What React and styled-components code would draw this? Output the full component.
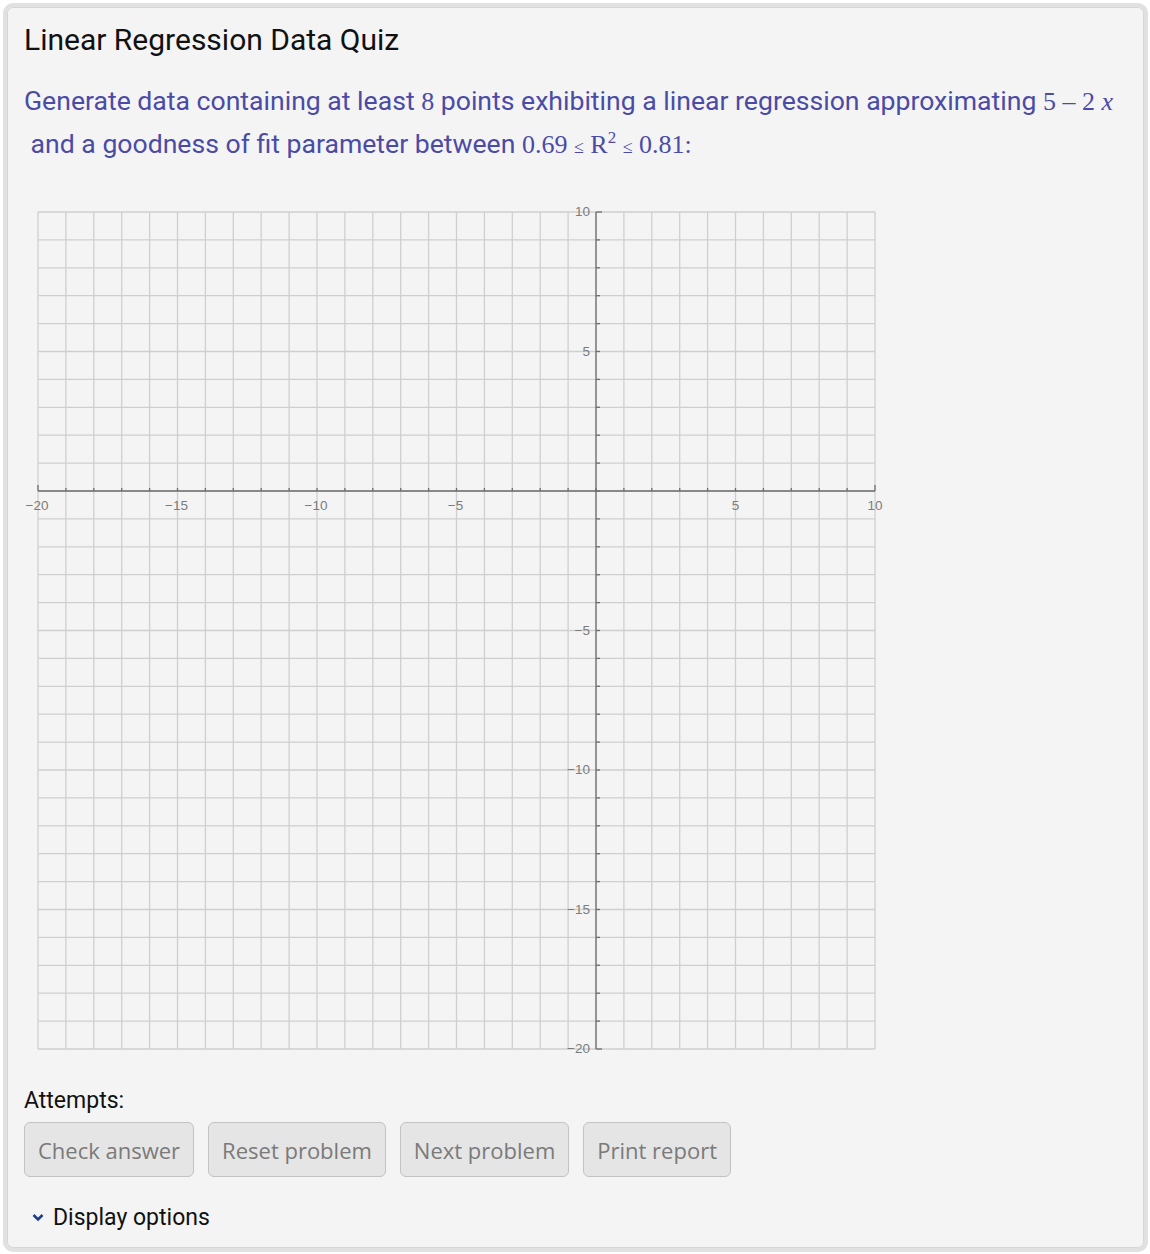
import styled, { createGlobalStyle } from "styled-components";

const Global = createGlobalStyle`
  body {
    margin: 0;
    background: #ffffff;
    font-family: Roboto, "Liberation Sans", sans-serif;
  }
`;

const U = 837 / 30;
const L = 14;
const T = 12;
const px = (x) => L + (x + 20) * U;
const py = (y) => T + (10 - y) * U;

function Plot() {
  const xs = [];
  for (let i = -20; i <= 10; i++) xs.push(i);
  const ys = [];
  for (let j = -20; j <= 10; j++) ys.push(j);
  const ax = px(0);
  const ay = py(0);
  return (
    <svg width="880" height="864" viewBox="0 0 880 864">
      <g stroke="#cfcfcf" strokeWidth="1.3">
        {xs.map((i) => (
          <line key={"v" + i} x1={px(i)} y1={py(10)} x2={px(i)} y2={py(-20)} />
        ))}
        {ys.map((j) => (
          <line key={"h" + j} x1={px(-20)} y1={py(j)} x2={px(10)} y2={py(j)} />
        ))}
      </g>
      <g stroke="#6e6e6e" strokeWidth="1.3">
        <line x1={px(-20)} y1={ay} x2={px(10)} y2={ay} />
        <line x1={ax} y1={py(10)} x2={ax} y2={py(-20)} />
        {xs.map((i) => (
          <line
            key={"tx" + i}
            x1={px(i)}
            y1={ay}
            x2={px(i)}
            y2={ay - (i === -20 || i === 10 ? 6 : 3)}
          />
        ))}
        {ys.map((j) => (
          <line
            key={"ty" + j}
            x1={ax}
            y1={py(j)}
            x2={ax + (j === -20 || j === 10 ? 6 : 4)}
            y2={py(j)}
          />
        ))}
      </g>
      <g
        fill="#7c7c7c"
        fontSize="13.5"
        fontFamily="'Liberation Sans', Arial, sans-serif"
      >
        {[-20, -15, -10, -5, 5, 10].map((i) => (
          <text key={"lx" + i} x={px(i) + (i > 0 ? 0 : -1)} y={ay + 19} textAnchor="middle">
            {i < 0 ? "\u2212" + Math.abs(i) : i}
          </text>
        ))}
        {[10, 5, -5, -10, -15, -20].map((j) => (
          <text key={"ly" + j} x={ax - 6} y={py(j) + 4} textAnchor="end">
            {j < 0 ? "\u2212" + Math.abs(j) : j}
          </text>
        ))}
      </g>
    </svg>
  );
}

function Chevron() {
  return (
    <svg width="12" height="9" viewBox="0 0 12 9">
      <path d="M1.5 2 L6 6.5 L10.5 2" fill="none" stroke="#1c3d8f" strokeWidth="2.6" />
    </svg>
  );
}

export default function App() {
  return (
    <>
      <Global />
      <Frame>
        <Title>Linear Regression Data Quiz</Title>
        <Prompt>
          Generate data containing at least <M>8</M> points exhibiting a linear
          regression approximating <M>5 &ndash; 2 <i>x</i></M>
          <br />
          &nbsp;and a goodness of fit parameter between{" "}
          <M>
            0.69 <Le>≤</Le> R<sup>2</sup> <Le>≤</Le> 0.81:
          </M>
        </Prompt>
        <PlotWrap>
          <Plot />
        </PlotWrap>
        <Attempts>Attempts:</Attempts>
        <ButtonRow>
          <Button>Check answer</Button>
          <Button>Reset problem</Button>
          <Button>Next problem</Button>
          <Button>Print report</Button>
        </ButtonRow>
        <Options>
          <Chevron />
          Display options
        </Options>
      </Frame>
    </>
  );
}

const Frame = styled.div`
  margin: 3px 2px 2px 3px;
  height: 1249px;
  box-sizing: border-box;
  border: 4px solid #e1e1e1;
  border-radius: 10px;
  background: #f4f4f4;
  box-shadow: inset 0 0 0 1px #d6d6d6;
  padding: 15px 16px 0 17px;
`;

const Title = styled.h1`
  margin: 0;
  font-family: Roboto, "Liberation Sans", sans-serif;
  font-weight: 400;
  font-size: 30px;
  line-height: 36px;
  color: #111;
`;

const Prompt = styled.p`
  margin: 22px 0 0 0;
  font-family: Roboto, "Liberation Sans", sans-serif;
  font-size: 26.6px;
  line-height: 42px;
  color: #4b4ba6;
  white-space: nowrap;
`;

const M = styled.span`
  font-family: "Liberation Serif", "DejaVu Serif", serif;
  font-size: 26px;

  sup {
    font-size: 17px;
    line-height: 0;
  }
`;

const Le = styled.span`
  font-size: 18px;
`;

const PlotWrap = styled.div`
  margin-top: 32px;
  height: 864px;
`;

const Attempts = styled.div`
  margin-top: 23px;
  font-size: 23px;
  line-height: 28px;
  color: #111;
`;

const ButtonRow = styled.div`
  display: flex;
  gap: 14px;
  margin-top: 7px;
`;

const Button = styled.button`
  height: 55px;
  padding: 0 13px;
  background: #e5e5e5;
  border: 1px solid #c3c3c3;
  border-radius: 6px;
  font-family: "Open Sans", "Liberation Sans", sans-serif;
  font-size: 22px;
  color: #7a7a7a;
`;

const Options = styled.div`
  display: flex;
  align-items: center;
  gap: 9px;
  margin-top: 27px;
  padding-left: 8px;
  font-size: 23px;
  color: #111;
`;
